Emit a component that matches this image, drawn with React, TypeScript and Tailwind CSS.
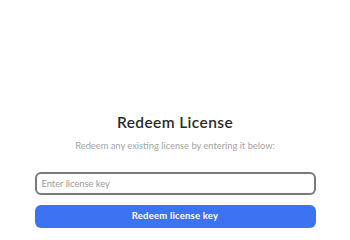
export default function App() {
  return (
    <div className="w-[350px] h-[230px] bg-white overflow-hidden flex flex-col items-center font-['Lato','Inter',sans-serif]">
      <h1 className="mt-[113px] text-[15.5px] leading-[18px] font-semibold text-[#2a2a2a] tracking-[0.4px]">Redeem License</h1>
      <p className="mt-[9px] text-[9.3px] leading-[12px] text-[#a3a3a3]">Redeem any existing license by entering it below:</p>
      <div className="mt-[20px] w-[281px] h-[23px] rounded-[6px] border-2 border-[#7a7a7a] flex items-center px-[5px]">
        <span className="text-[9.3px] text-[#9a9a9a]">Enter license key</span>
      </div>
      <button className="mt-[10px] w-[281px] h-[23px] rounded-[6px] bg-[#3c73f2] text-white text-[9.5px] font-bold tracking-[0.2px] flex items-center justify-center">
        Redeem license key
      </button>
    </div>
  );
}
